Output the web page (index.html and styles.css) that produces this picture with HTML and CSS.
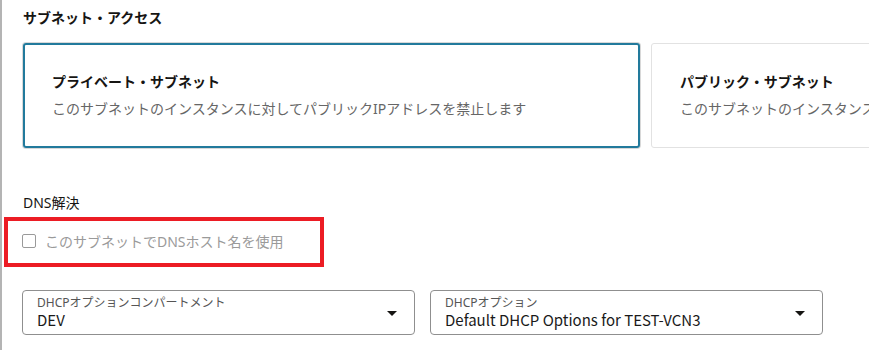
FILE: index.html
```html
<!DOCTYPE html>
<html lang="ja">
<head>
<meta charset="utf-8">
<link rel="stylesheet" href="styles.css">
</head>
<body>
<div class="page">
  <h2 class="section-title">サブネット・アクセス</h2>
  <div class="cards">
    <div class="card selected">
      <div class="card-title">プライベート・サブネット</div>
      <div class="card-desc">このサブネットのインスタンスに対してパブリックIPアドレスを禁止します</div>
    </div>
    <div class="card">
      <div class="card-title">パブリック・サブネット</div>
      <div class="card-desc">このサブネットのインスタンスにパブリックIPアドレスの割当てを許可します</div>
    </div>
  </div>
  <div class="dns-label">DNS解決</div>
  <div class="check-wrap">
    <label class="check-row"><span class="checkbox"></span><span class="check-text">このサブネットでDNSホスト名を使用</span></label>
    <div class="highlight"></div>
  </div>
  <div class="selects">
    <div class="select">
      <div class="select-text">
        <div class="select-label">DHCPオプションコンパートメント</div>
        <div class="select-value">DEV</div>
      </div>
      <span class="arrow"></span>
    </div>
    <div class="select">
      <div class="select-text">
        <div class="select-label">DHCPオプション</div>
        <div class="select-value">Default DHCP Options for TEST-VCN3</div>
      </div>
      <span class="arrow"></span>
    </div>
  </div>
</div>
</body>
</html>
```

FILE: styles.css
```css
html, body {
  margin: 0;
  padding: 0;
  background: #fff;
  overflow: hidden;
}
body {
  font-family: "Noto Sans", "Noto Sans CJK JP", sans-serif;
  color: #161513;
  width: 869px;
  height: 350px;
}
.page {
  border-left: 2px solid #b4b4b4;
  height: 350px;
  box-sizing: border-box;
  padding: 8px 0 0 21px;
  overflow: hidden;
}
.section-title {
  margin: 0;
  font-size: 14px;
  font-weight: 700;
  line-height: 20px;
}
.cards {
  display: flex;
  gap: 11px;
  margin-top: 15px;
  width: 1300px;
}
.card {
  flex: 0 0 auto;
  width: 617px;
  height: 105px;
  box-sizing: border-box;
  border: 1px solid #e2e2e2;
  border-radius: 3px;
  padding: 29px 0 0 28px;
}
.card.selected {
  border: 2px solid #227a9c;
  box-shadow: 0 0 0 1px #d8d8d8;
  padding: 28px 0 0 27px;
}
.card-title {
  font-size: 14px;
  font-weight: 700;
  line-height: 18px;
}
.card-desc {
  margin-top: 9px;
  font-size: 14px;
  line-height: 18px;
  color: #666;
}
.dns-label {
  margin-top: 45px;
  font-size: 14px;
  line-height: 20px;
}
.check-wrap {
  position: relative;
  margin-top: 19px;
  height: 18px;
}
.check-row {
  display: flex;
  align-items: center;
  gap: 9px;
  height: 18px;
}
.checkbox {
  width: 12px;
  height: 12px;
  border: 1px solid #9a9a9a;
  border-radius: 2px;
  flex: 0 0 auto;
  margin-left: -1px;
}
.check-text {
  font-size: 14px;
  color: #9a9a9a;
}
.highlight {
  position: absolute;
  left: -19px;
  top: -15px;
  width: 320px;
  height: 50px;
  box-sizing: border-box;
  border: 4px solid #ec1c24;
}
.selects {
  display: flex;
  gap: 15px;
  margin-top: 40px;
  margin-left: -1px;
}
.select {
  width: 393px;
  height: 45px;
  box-sizing: border-box;
  border: 1px solid #8f8f8f;
  border-radius: 4px;
  display: flex;
  align-items: center;
  padding: 0 17px 0 14px;
}
.select-text {
  flex: 1;
}
.select-label {
  font-size: 12px;
  line-height: 14px;
  color: #555;
}
.select-value {
  font-family: "Noto Sans CJK JP", "Noto Sans", sans-serif;
  font-size: 15px;
  line-height: 19px;
  font-weight: 400;
  color: #1a1a1a;
}
.arrow {
  width: 0;
  height: 0;
  border-left: 5px solid transparent;
  border-right: 5px solid transparent;
  border-top: 5px solid #161513;
  margin-top: 2px;
}
```
